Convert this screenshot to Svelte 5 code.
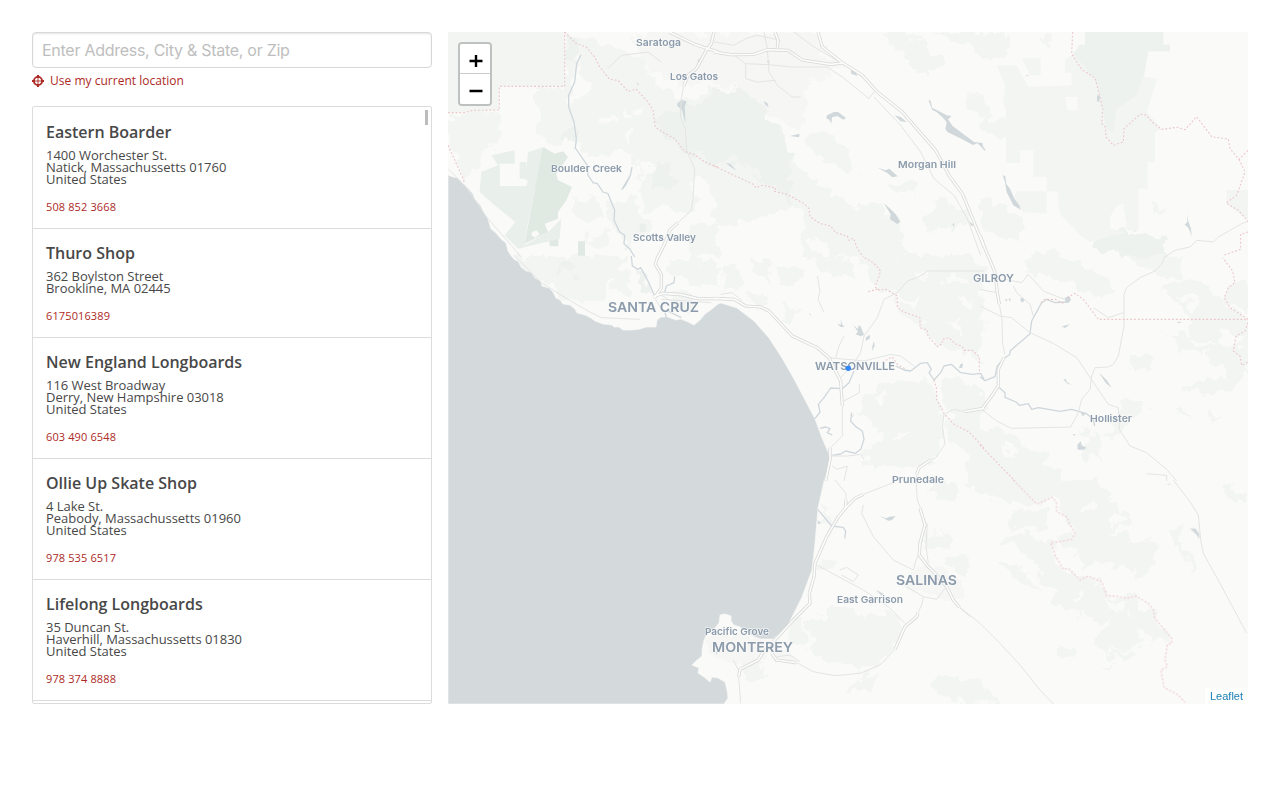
<script>
  const shops = [
    { name: 'Eastern Boarder', lines: ['1400 Worchester St.', 'Natick, Massachussetts 01760', 'United States'], phone: '508 852 3668' },
    { name: 'Thuro Shop', lines: ['362 Boylston Street', 'Brookline, MA 02445'], phone: '6175016389' },
    { name: 'New England Longboards', lines: ['116 West Broadway', 'Derry, New Hampshire 03018', 'United States'], phone: '603 490 6548' },
    { name: 'Ollie Up Skate Shop', lines: ['4 Lake St.', 'Peabody, Massachussetts 01960', 'United States'], phone: '978 535 6517' },
    { name: 'Lifelong Longboards', lines: ['35 Duncan St.', 'Haverhill, Massachussetts 01830', 'United States'], phone: '978 374 8888' }
  ];

  // Map tiles, each drawn at three units per pixel from its own origin.
  const tiles = {
    a: [0, 0], b: [266, 0], c: [532, 0],
    d: [0, 224], e: [266, 224], f: [532, 224],
    g: [232, 448], h: [512, 448]
  };

  const rough = [
    ['a', 'urban', 'M560 0H810V150L690 160L610 120L560 60Z'],
    ['b', 'urban', 'M0 0H305L330 60L400 105L330 130L280 160L285 240L240 290L160 240L80 180L0 150Z'],
    ['a', 'green', 'M0 245L150 238L145 310L110 370L100 395L55 450L0 340Z'],
    ['a', 'green', 'M270 170H345V0L430 30L570 70L620 150L700 210L810 160V470L740 430L700 480L620 500L560 420L490 360L430 370L390 350L370 280L340 340L300 330L270 300Z'],
    ['a', 'green', 'M610 390L720 370L740 520L700 560L650 520L600 530L560 480Z M470 510L560 500L610 600L540 640L500 590Z M380 490L440 500L470 560L420 580L370 540Z M430 600L480 590L490 640L430 650Z M700 600L810 560V675H730Z'],
    ['a', 'park', 'M350 0L400 30L400 65L370 90L350 60Z M620 250L690 240L810 180V400L720 360L640 300Z M610 400L660 395L680 450L630 470Z M350 290L385 285L380 330L350 320Z'],
    ['a', 'land', 'M370 130L400 70L395 130L440 150L430 175L370 210Z M440 265L520 255L500 275L450 278Z M545 235L580 235L570 248L545 245Z M495 360H550V450L500 430Z M420 380L480 370L470 400L430 395Z M520 310L555 300L545 330Z M585 380L610 410L580 440L560 410Z M590 120L680 130L690 180L640 170Z'],
    ['b', 'green', 'M0 170L90 180L165 240L230 320L250 400L330 460L420 530L480 510L555 570L570 675H260L270 560L160 545L60 590L0 560Z M285 310L330 300L400 350L440 420L400 435L330 390L280 340Z'],
    ['b', 'park', 'M0 170L90 180L165 240L230 320L232 535L180 460L60 380L0 400Z'],
    ['b', 'land', 'M165 245L230 300L280 370L360 400L430 440L420 470L350 460L270 410L220 360L215 310L160 270Z M140 545L250 540L270 620L180 660L100 620Z M30 570L90 575L70 650L0 640Z M290 630L350 620L340 670L290 660Z'],
    ['b', 'green', 'M520 0H600L640 70L700 90L620 130L580 80L530 40Z M640 0L760 30L810 80V0Z M760 190H810V250L740 240Z M530 440L610 450L590 490L530 480Z M670 500L760 530L770 580L650 600L630 560Z'],
    ['c', 'green', 'M0 0H70L110 40L40 90L0 60Z M0 250L80 260L90 300L40 320L0 290Z M0 500L60 510L130 560L120 630L50 620L0 570Z M170 30L210 10L215 50Z M510 500L550 530L545 550L520 540Z'],
    ['c', 'park', 'M340 620L430 590L550 620L560 670L420 675L340 655Z'],
    ['d', 'green', 'M190 0H540L500 60L470 130L360 130L300 80L240 50Z M500 40L550 60L530 120L500 90Z M650 20L740 0L810 40L810 90L700 80Z M660 110L730 120L740 170L670 160Z'],
    ['d', 'park', 'M340 15L395 25L380 60L330 45Z M570 50L610 60L600 120L575 100Z'],
    ['e', 'green', 'M430 0H760L810 40V320L750 300L680 270L630 220L560 170L540 110L480 90Z M20 50L60 20L90 70L50 100Z M110 10L160 20L170 70L120 60Z M190 40L260 30L270 80L200 90Z M280 0L400 10L430 60L350 60Z M100 110L170 120L170 150L110 150Z M200 150L260 160L240 210L200 190Z'],
    ['e', 'green', 'M450 420L540 370L650 380L690 470L680 600L610 630L520 620L480 650L440 600L500 540L470 490L430 470Z M680 380L760 370L810 410V480L730 500L690 440Z M700 490L810 470V675H760L770 600L700 550Z'],
    ['e', 'land', 'M690 60L760 70L720 90Z M590 60L640 40L620 80Z M560 120L610 130L600 150L560 140Z M730 120L780 130L750 150Z M480 430L520 410L520 440Z M540 540L600 530L560 560Z M700 210L750 190L740 230Z'],
    ['f', 'green', 'M130 10L230 0L340 30L410 110L340 120L260 80L190 60L120 50Z M440 0H600L610 60L560 70L490 40Z M540 100L600 70L690 90L730 130L760 170L810 190V350L750 370L680 300L620 290L560 240L640 220L610 150Z M750 80L810 70V170L740 140Z M450 290L500 280L540 310L500 350L450 330Z M590 400L680 370L790 360L770 400L670 410Z M420 430L490 420L490 480L430 500Z M400 480L430 490L440 530L380 540Z'],
    ['f', 'green', 'M0 510L80 530L170 590L230 640L250 675H0Z M310 520L370 540L360 620L310 590Z M600 460L640 480L610 490Z M690 490L730 480L700 510Z'],
    ['f', 'land', 'M600 110L650 120L640 160Z M720 220L790 240L770 270L710 250Z M640 240L700 260L660 280Z M60 560L120 580L90 600Z'],
    ['g', 'green', 'M380 440L460 390L540 410L620 385L665 430L640 510L600 560L520 570L440 540L390 530Z M740 160L810 155L820 200L760 220L720 200Z M780 590L830 585L860 620V660L800 650L760 620Z M320 430L370 420L370 490L320 500Z M190 540L260 550L250 600L190 600Z M800 230L860 220V280L800 260Z M740 20L800 0L830 40L770 60Z M430 70L470 90L440 120Z M430 230L480 250L460 280L420 260Z M500 640L560 580L600 590L520 650Z'],
    ['g', 'urban', 'M690 260L780 270L860 310L850 350L770 360L680 320Z M270 490L350 520L360 550L280 550Z M85 450L270 480L250 540L160 560L90 520Z'],
    ['h', 'green', 'M20 0H420L450 60L500 100L510 140L460 150L520 180L590 190L590 250L540 290L480 260L400 240L360 270L350 210L280 190L340 150L310 90L280 50L225 75L140 60L60 50Z M160 100L260 90L260 140L180 150L150 130Z M130 170L190 160L270 190L300 260L370 300L430 310L440 350L530 350L580 400L630 480L590 490L540 450L520 500L430 520L400 480L440 420L380 430L340 390L270 370L300 330L250 310L230 250L170 200Z M0 600L60 610L120 670H0Z M790 20L860 40V85L810 60Z M120 250L200 280L240 330L200 320Z M300 500L350 500L350 530L310 530Z'],
    ['h', 'green', 'M640 150L670 140L660 180L710 240L700 290L690 240L640 190Z M540 500L550 520L450 540L430 525Z M420 570L470 550L450 575Z M110 170L150 165L140 200Z M0 240L30 260L0 290Z'],
    ['h', 'land', 'M395 60L410 75L400 100L370 110Z M440 360L480 370L490 400L450 380Z M500 360L525 410L510 405Z M320 350L360 340L350 365Z M380 400L400 420L370 450Z M470 140L490 100L470 95L450 120Z']
  ];

  const flat = [
    ['a', 'green', 'M0 0H350V163H154V233L0 242Z'],
    ['c', 'green', 'M50 100H110L145 165L275 160V122H255V85L280 65L300 38H315V0H550V38H570V58H505L492 135L532 140L500 240L545 290L525 300V390H503V470H475V595H442L430 515L412 520L390 555V590L440 600L330 630L300 610L240 545L235 515V478H200V435H160V355H120V393H78V230L70 215L75 160Z'],
    ['c', 'green', 'M110 478H200V545L130 540L100 500Z M740 474H804V565L740 515Z M125 78H182V130H150Z'],
    ['c', 'park', 'M315 0H550V38H570V58H505L490 135L470 190L410 230L400 300L380 290L370 240L350 150L320 110L280 65L300 38H315Z'],
    ['c', 'land', 'M255 195H293V235H262Z'],
    ['a', 'wood', 'M100 420L150 400L130 370L200 355L200 395H155V462H262L235 600L190 560L140 520L95 480Z M215 390H235V440H215Z M240 360L290 345L262 470H230Z'],
    ['a', 'forest', 'M285 345L320 365L345 358L360 375L325 425L330 445L372 465L355 505L330 540L330 560L290 575L300 600L230 635L262 465Z M390 628H411V671H390Z M302 620H331V643H306Z'],
    ['a', 'wood', 'M210 560L240 550L230 640L300 600L340 560L335 620L210 650L170 610Z M575 575H595V600H575Z'],
    ['a', 'land', 'M252 600L265 595L275 606L262 617L250 610Z M210 450L240 445L235 462H210Z']
  ];

  const lakes = [
    ['b', 'M339 250L360 240L372 240L396 258L388 263L370 252L354 256L352 275L346 263L337 259Z'],
    ['b', 'M643 203L650 207L655 228L680 240L697 250L713 252L702 262L716 282L727 290L780 330L805 333L808 350L790 334L777 339L745 322L700 300L694 290L698 272L690 260L668 240L655 234Z'],
    ['b', 'M491 407L515 415L526 410L551 433L535 436L520 423Z M509 513L530 532L545 547L559 570L550 576L528 562L530 547Z M542 250L560 255L578 270L560 268Z M410 115L425 120L430 132L412 125Z M148 207L160 213L164 226L155 220Z M228 312L257 305L255 316Z M36 392L48 395L68 416L50 405Z M158 88L166 84L166 96Z M715 578L720 572L721 585Z M765 567L780 580L772 582Z'],
    ['a', 'M687 215L700 204L716 208L710 225L713 272L707 255L703 235L688 222Z M749 85L758 78L758 90L750 98Z M564 150L574 158L570 160Z'],
    ['c', 'M68 429L76 433L79 456L90 470L103 500L118 520L122 533L100 520L80 480L75 450Z M622 545L624 565L633 590L635 615L630 598L623 585L614 578L622 570Z M351 190L360 192L357 211L351 207Z M137 129L147 130L142 133Z'],
    ['e', 'M380 190L384 204L391 213L380 213L370 203L381 206Z M418 208L432 219L434 208L441 212L447 230L451 236L440 241L425 235L432 227Z M455 245L467 236L468 247L456 255Z M480 256L482 270L475 285L475 270Z M739 325L747 322L745 335L735 337Z M285 170L293 179L288 177Z'],
    ['f', 'M255 125L268 120L273 132L264 142L255 135Z M74 130L82 130L80 137Z M85 128L92 128L91 137Z M120 128L130 125L133 135L125 140Z M250 370L258 370L260 378L276 387L260 382Z M292 567L302 556L305 568L319 575L312 581L293 581Z M277 534L286 535L284 540Z M245 211L270 205L255 216Z M590 198L606 197L597 202Z M302 470L318 473L308 481Z M357 350L380 372L395 395L378 382Z'],
    ['g', 'M598 108L618 115L628 110L647 108L636 120L625 122Z M412 120L424 129L415 133Z M587 329L612 342L605 347Z M107 510L113 518L110 525Z'],
    ['h', 'M690 145L706 145L717 160L719 178L710 165Z M622 11L634 13L626 15Z']
  ];

  const streams = [
    ['a', 'M399 68L386 95L380 150L362 190L362 225L378 270L385 320L382 348L418 400L420 430L435 452L448 455L465 480L480 485L500 535L498 565L515 600L530 610L528 635L545 650L560 675'],
    ['a', 'M552 405L547 430L535 450L522 472L532 460L545 435'],
    ['d', 'M550 0L553 30L570 40L578 35L600 75L620 120'],
    ['d', 'M680 62L678 80L655 90L650 110 M660 165L680 175L700 185 M650 165L655 185'],
    ['e', 'M545 330L570 342L590 345L620 322L640 320L652 340L645 350L660 372L680 350L690 330L712 325L740 350L775 355L800 352L810 370'],
    ['e', 'M420 345L405 380L385 398L350 396L330 425L313 445L318 468L303 488'],
    ['e', 'M413 470L410 495L425 512L445 525L450 550L440 580L425 592L395 585L380 594L355 598'],
    ['e', 'M318 517L335 513L348 518L340 530L355 537'],
    ['f', 'M0 362L15 374L45 362L52 330L75 305L90 295L90 285L150 233L155 195L185 140L200 130L225 140L262 138'],
    ['f', 'M58 395L75 410L75 424L108 438L118 448L145 443L155 460L175 455L240 466L275 460L320 473L340 490L344 510'],
    ['g', 'M413 88L455 138L490 142L497 155L494 175'],
    ['c', 'M0 334L15 355']
  ];

  const bigRoads = [
    ['a', 'M664 0L740 37L810 60'],
    ['a', 'M798 0L790 35L775 55L745 110L720 130L707 162'],
    ['b', 'M0 60L50 68L120 67L160 53L222 55L265 84L350 97L385 93'],
    ['b', 'M312 0L325 45L382 90L445 130L490 180L565 240L665 355L705 430L745 485L780 570L810 645'],
    ['b', 'M183 0L192 25L190 50'],
    ['a', 'M690 572L665 595L650 635L630 675'],
    ['d', 'M630 0L622 25L640 55L640 95L620 125'],
    ['d', 'M615 122L645 112L700 116L750 128L810 128'],
    ['e', 'M0 127L60 130L95 150L140 153L165 165L235 240L310 275L345 305L365 345L380 375L385 450'],
    ['c', 'M0 610L25 675'],
    ['f', 'M25 0L45 50L52 110L58 145'],
    ['f', 'M72 305L55 340L55 390L35 420L5 460'],
    ['e', 'M810 457L750 467 M608 655L615 635L650 612'],
    ['e', 'M348 575L348 610L335 675'],
    ['g', 'M550 43L525 55L500 80L475 110L440 170L405 250L402 290L388 340L390 370L340 420L280 485'],
    ['g', 'M498 60L496 85'],
    ['g', 'M720 85L735 135L720 190L718 225L740 255L765 280L800 320L820 360L838 382'],
    ['g', 'M714 398L710 410L675 440L645 508'],
    ['g', 'M280 495L250 515L235 540L180 568L176 590'],
    ['g', 'M275 520L290 540L350 548']
  ];

  const roads = [
    ['a', 'M707 162L700 200L697 255L712 290L716 355L740 410L735 500L730 535L690 572'],
    ['a', 'M0 410L50 460L120 560L190 640L220 675 M640 90L600 60L520 70L480 110'],
    ['b', 'M0 30L60 40L95 20L130 10L200 25 M95 95L165 98L230 105L340 105L385 135L465 200L480 180 M150 0L160 50L165 120L190 160L235 195H260 M55 65L95 95L95 140L130 150L185 145 M240 0L300 45L380 92'],
    ['b', 'M480 195L560 280L620 360L660 440L720 490L760 560L800 670'],
    ['c', 'M555 675L585 655L630 645L650 625L700 630L715 615L785 575L804 568'],
    ['f', 'M555 0L545 25L525 45L480 65L440 95L432 115L432 210L415 300L400 325L385 333L345 335L335 360L330 400L305 430L295 470L272 513L95 517L50 495L5 460'],
    ['f', 'M58 145L66 190L68 265L75 295 M0 100L50 110 M0 150L60 180L95 185L150 230L220 262L290 305L385 445L415 455L418 520L450 570L500 590L560 640L590 675 M75 70L125 80L145 55L190 105L240 125L260 130 M100 90L110 110L150 145L160 180 M340 155L385 185L430 170 M500 653L560 658V675'],
    ['d', 'M200 0L280 80L360 130L420 165L460 185L575 190 M620 125L640 160 M630 110L660 130L700 145 M640 130L720 135L790 140'],
    ['e', 'M20 115L55 110L85 135 M310 60L318 105L312 130L330 170 M810 45H640L610 65L580 75L550 110L510 130L490 185L450 240L440 290L420 320L380 365 M345 305L450 315L530 295L560 300L600 330 M385 450L385 540L350 575 M750 467L720 460L690 475L685 510L693 565L665 605L650 612 M436 385V410L390 435 M365 305L375 270L390 240'],
    ['e', 'M350 600L400 600L440 595L450 610 M355 630L370 640L400 630L390 675 M410 490L420 475 M605 675L608 655'],
    ['g', 'M550 43L640 8 M465 0L498 40V60 M708 0L712 60L722 85 M742 130L738 200L745 250 M550 75L545 100L580 170L640 240L700 270 M410 255L550 330L625 380L675 430 M700 270L708 240L715 225 M680 320L730 350L770 358L795 325 M730 350L725 375L714 398 M838 382L870 410 M645 508L600 555L540 580L465 587L400 575L350 548 M176 590L182 670 M290 530L330 525L360 545 M480 270L500 262L535 285L520 305L485 285 M160 540L175 570'],
    ['h', 'M0 382L60 430L120 490L180 555L240 630L280 672'],
    ['h', 'M640 0L690 65L715 105L722 180L730 220L780 310L860 460']
  ];

  const borders = [
    ['a', 'M0 242L50 242L75 235L154 234V163H350V0'],
    ['a', 'M350 0L385 35L415 45L440 75L455 105L485 142L510 145L540 178L565 172L600 210L615 235L622 285L640 298L680 320L710 358L740 368L770 390L810 406'],
    ['a', 'M0 340L25 395L50 452'],
    ['b', 'M0 402L60 430L120 458L125 467L145 460L185 468L180 478L220 487L270 515L285 530L288 555L320 575L350 582L365 602L400 612L405 625L418 618L430 650L448 675'],
    ['e', 'M452 5L480 22L500 45L490 75L483 92L495 102L515 100L550 120V155L570 168L618 185L618 215L640 222L642 240L670 272L685 262L685 250L705 245L722 262L745 272L750 283L775 283L796 302V352'],
    ['e', 'M463 107L495 98 M505 318L535 303L550 325L575 340 M660 372L667 395L668 430L690 472L720 505L765 528L810 575'],
    ['c', 'M278 0L275 65L305 112L345 138L356 180L368 230L365 275L376 285L378 315L400 340L430 330L432 290L480 247L497 249L520 273L545 292L590 286L615 293L650 254L695 314L745 321L750 350L777 382L804 355'],
    ['c', 'M777 382L795 420L770 490L738 513L775 535L804 568 M804 600L782 607V652L730 670'],
    ['f', 'M183 140L195 130L225 130L250 142 M262 125L285 112L310 130L355 190H804L750 155L733 125L745 95L765 80L758 45L728 5 M804 200L795 225L768 240L760 285L780 300L785 328L804 318'],
    ['f', 'M0 567L105 675'],
    ['h', 'M160 0L230 72L278 52L290 70V95L322 112L328 130L345 160L335 178L300 185L272 188L285 225L310 268L325 265L360 300L385 288L425 305L440 348L465 348L500 355L528 348L565 370L580 390L585 415L635 475V490L622 493L615 540L622 560L603 570L612 622L655 645L675 668']
  ];

  const labels = [
    ['Saratoga', 636, 46.3, 45, 9.6], ['Los Gatos', 670, 80.3, 48, 9.6], ['Boulder Creek', 551, 172.3, 71, 9.6],
    ['Morgan Hill', 898, 168.3, 58, 9.6], ['Scotts Valley', 633, 241, 63, 9.6], ['GILROY', 973, 281.7, 41, 10.6],
    ['SANTA CRUZ', 608, 312.2, 91, 13.4], ['WATSONVILLE', 815, 370, 80, 10.6], ['Hollister', 1090, 421.5, 42, 9.6],
    ['Prunedale', 892, 483, 52, 9.6], ['SALINAS', 896, 585, 61, 13.4], ['East Garrison', 837, 603, 66, 9.6],
    ['Pacific Grove', 705, 635, 64, 9.6], ['MONTEREY', 712, 652.3, 81, 13.4]
  ];

  const place = (key) => `translate(${tiles[key][0]} ${tiles[key][1]}) scale(${1 / 3})`;
</script>

<main>
  <aside>
    <input type="text" placeholder="Enter Address, City & State, or Zip" />
    <a class="locate" href="#locate">
      <svg width="12" height="12" viewBox="0 0 12 12" aria-hidden="true">
        <circle cx="6" cy="6" r="4.1" fill="none" stroke="currentColor" stroke-width="1.9" />
        <path d="M6 0V3M6 9V12M0 6H3M9 6H12" stroke="currentColor" stroke-width="2" />
        <path d="M6 3V9M3 6H9" stroke="currentColor" stroke-width="0.9" />
      </svg>
      <span>Use my current location</span>
    </a>
    <div class="list">
      {#each shops as shop}
        <article>
          <h2>{shop.name}</h2>
          <address>
            {#each shop.lines as line}<div>{line}</div>{/each}
          </address>
          <a class="phone" href="#call">{shop.phone}</a>
        </article>
      {/each}
      <i class="thumb"></i>
    </div>
  </aside>

  <section class="map">
    <svg width="800" height="672" viewBox="0 0 800 672">
      <defs>
        <filter id="ragged" x="0" y="0" width="800" height="672" filterUnits="userSpaceOnUse">
          <feTurbulence type="fractalNoise" baseFrequency="0.07" numOctaves="3" seed="4" />
          <feDisplacementMap in="SourceGraphic" scale="22" xChannelSelector="R" yChannelSelector="G" />
        </filter>
      </defs>
      <g filter="url(#ragged)">
        {#each rough as [tile, kind, d]}<path class={kind} transform={place(tile)} {d} />{/each}
      </g>
      {#each flat as [tile, kind, d]}<path class={kind} transform={place(tile)} {d} />{/each}
      <path
        class="water"
        transform="translate(-448 -32)"
        d="M448 175L453 177L458 178L462 183L467 187L473 194L475 199L481 206L484 213L488 219L491 229L496 233L501 239L506 243L508 251L512 257L515 260L518 261L521 267L526 271L531 272L535 278L541 281L542 286L549 288L553 292L556 298L560 300L563 304L570 305L575 309L577 313L585 315L591 318L595 321L603 324L612 325L614 327L619 327L623 330L632 330L640 329L646 327L656 327L657 320L661 317L668 317L676 320L681 319L688 322L694 325L700 320L705 314L712 309L718 304L721 303L737 308L754 321L769 338L782 358L794 379L804 398L815 419L822 438L829 454L830 461L824 481L818 508L815 543L812 570L802 597L787 627L773 639L761 639L755 637L747 633L740 627L734 625L731 621L731 616L725 614L720 615L719 623L714 629L707 634L704 640L702 650L702 656L696 661L692 665L699 668L698 673L704 677L710 682L712 677L718 678L725 682L727 690L728 698L724 704H448Z"
      />
      {#each lakes as [tile, d]}<path class="lake" transform={place(tile)} {d} />{/each}
      {#each streams as [tile, d]}<path class="line stream" transform={place(tile)} {d} />{/each}
      {#each roads as [tile, d]}<path class="line road" transform={place(tile)} {d} />{/each}
      {#each bigRoads as [tile, d]}<path class="line casing" transform={place(tile)} {d} />{/each}
      {#each bigRoads as [tile, d]}<path class="line fill" transform={place(tile)} {d} />{/each}
      {#each borders as [tile, d]}<path class="line border" transform={place(tile)} {d} />{/each}
      {#each labels as [text, x, y, w, size]}
        <text x={x - 448} y={y - 32} font-size={size} textLength={w} lengthAdjust="spacingAndGlyphs">{text}</text>
      {/each}
      <circle cx="400.3" cy="336.3" r="2.7" fill="#3388ff" />
    </svg>
    <div class="zoom">
      <button aria-label="Zoom in"><svg width="14" height="14" viewBox="0 0 14 14"><path d="M7 1V13M0.5 7H13.5" /></svg></button>
      <button aria-label="Zoom out"><svg width="14" height="14" viewBox="0 0 14 14"><path d="M0.5 7H13.5" /></svg></button>
    </div>
    <a class="credit" href="#leaflet">Leaflet</a>
  </section>
</main>

<style>
  :global(body) { background: #fff; overflow: hidden; }
  * { box-sizing: border-box; }
  main {
    display: grid;
    grid-template-columns: 400px 800px;
    gap: 16px;
    height: 704px;
    padding: 32px 32px 0;
    font-family: "Open Sans", sans-serif;
    color: #484848;
  }
  aside { display: flex; flex-direction: column; height: 672px; }
  input {
    flex: none;
    width: 400px;
    height: 36px;
    padding: 0 9px;
    border: 1px solid #d8d8d8;
    border-radius: 4px;
    box-shadow: inset 0 1px 2px #0000001c;
    font: 16px Inter, sans-serif;
    letter-spacing: -0.27px;
    outline: none;
  }
  input::placeholder { color: #bebebe; opacity: 1; }
  a { color: #ad2a25; text-decoration: none; }
  .locate { display: flex; align-items: center; gap: 6px; height: 16px; margin: 5px 0 17px; font-size: 12px; line-height: 16px; letter-spacing: 0.02px; }
  .locate svg { flex: none; }
  .list { position: relative; height: 598px; padding-top: 1px; overflow: hidden; border: 1px solid #dcdcdc; border-radius: 2px; }
  article { padding: 14px 13px 14px; border-bottom: 1px solid #dcdcdc; }
  h2 { margin: 0; font-size: 16px; line-height: 20px; font-weight: 600; }
  address { margin-top: 7px; font-style: normal; font-size: 13px; line-height: 12px; letter-spacing: -0.03px; }
  .phone { display: block; margin-top: 14px; font-size: 11px; line-height: 15px; letter-spacing: 0.12px; }
  .thumb { position: absolute; right: 3px; top: 3px; width: 3px; height: 15px; background: #bcbcbc; }
  .map { position: relative; width: 800px; height: 672px; overflow: hidden; background: #fafaf8; }
  .map > svg { display: block; }
  .land { fill: #fafaf8; }
  .urban { fill: #f6f6f5; }
  .green { fill: #f3f5f3; }
  .park { fill: #edf2ee; }
  .wood { fill: #e9efea; }
  .forest { fill: #e0e9e2; }
  .water { fill: #d4dadc; stroke: #fafaf8; stroke-width: 0.6; }
  .lake { fill: #d0d8db; }
  .line { fill: none; vector-effect: non-scaling-stroke; stroke-linejoin: round; }
  .stream { stroke: #cfd7dc; stroke-width: 1.3; }
  .road { stroke: #e3e4e4; stroke-width: 1; }
  .casing { stroke: #d6d7d7; stroke-width: 3.2; }
  .fill { stroke: #fcfcfb; stroke-width: 1.7; }
  .border { stroke: #ebc6c9; stroke-width: 1.1; stroke-dasharray: 1.8 2; }
  text {
    font-family: Inter, sans-serif;
    font-weight: 600;
    fill: #8b9bac;
    stroke: #fafaf8;
    stroke-width: 1.6px;
    stroke-opacity: 0.75;
    stroke-linejoin: round;
    paint-order: stroke;
  }
  .zoom {
    position: absolute;
    left: 10px;
    top: 10px;
    display: flex;
    flex-direction: column;
    width: 34px;
    border: 2px solid #bfc1c0;
    border-radius: 4px;
    overflow: hidden;
  }
  .zoom button { display: grid; place-items: center; height: 30px; padding: 4px 0 0; border: 0; background: #fff; }
  .zoom button:first-child { height: 29px; padding-top: 5px; }
  .zoom button + button { height: 31px; border-top: 1px solid #ccc; }
  .zoom svg { position: relative; left: 0.5px; }
  .zoom path { stroke: #000; stroke-width: 2.4; }
  .credit {
    position: absolute;
    right: 0;
    bottom: 0;
    padding: 0 5px;
    font: 11px/16px "Liberation Sans", sans-serif;
    color: #1b7fb5;
    background: #ffffffb3;
  }
</style>
